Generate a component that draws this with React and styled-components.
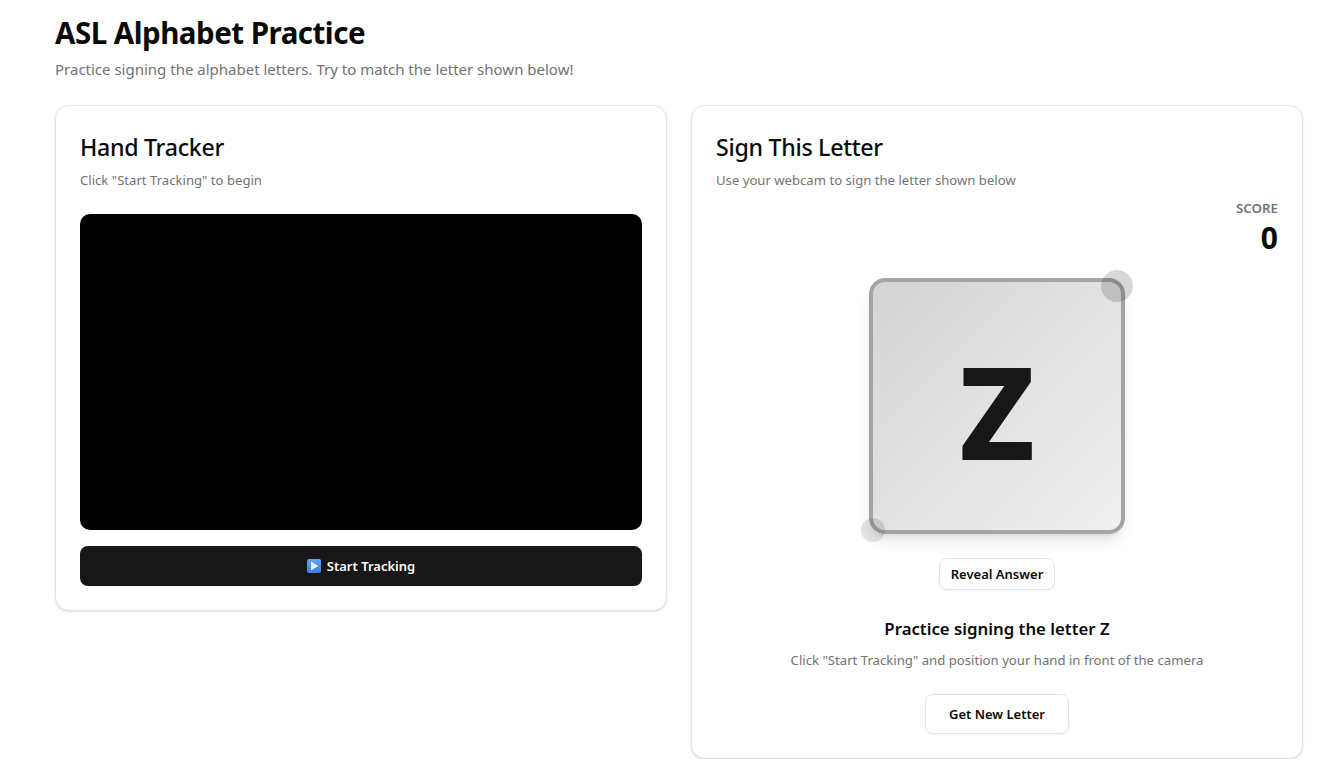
import React from 'react';
import styled, { createGlobalStyle } from 'styled-components';

const GlobalStyle = createGlobalStyle`
  html, body {
    margin: 0;
    padding: 0;
    background: #ffffff;
    color: #0a0a0a;
    font-family: "Noto Sans", "Open Sans", "Liberation Sans", sans-serif;
  }
  * { box-sizing: border-box; }
`;

const Page = styled.main`
  padding: 15px 31px 0 55px;
`;

const Title = styled.h1`
  margin: 0;
  font-size: 29.5px;
  line-height: 36px;
  font-weight: 700;
  letter-spacing: -0.5px;
`;

const Subtitle = styled.p`
  margin: 6px 0 0;
  font-size: 15px;
  line-height: 24px;
  color: #737373;
`;

const Columns = styled.div`
  display: grid;
  grid-template-columns: 1fr 1fr;
  gap: 24px;
  align-items: start;
  margin-top: 24px;
`;

const Card = styled.section`
  border: 1px solid #e5e5e5;
  border-radius: 14px;
  background: #fff;
  padding: 26px 24px 24px;
  box-shadow: 0 1px 3px rgba(0, 0, 0, 0.1), 0 1px 2px -1px rgba(0, 0, 0, 0.1);
`;

const CardTitle = styled.h2`
  margin: 0;
  font-size: 23.2px;
  line-height: 31px;
  font-weight: 500;
  letter-spacing: -0.3px;
`;

const CardNote = styled.p`
  margin: 7px 0 0;
  font-size: 13.13px;
  line-height: 20px;
  color: #737373;
`;

const Video = styled.div`
  margin-top: 24px;
  aspect-ratio: 16 / 9;
  background: #000;
  border-radius: 10px;
`;

const TrackButton = styled.button`
  display: flex;
  align-items: center;
  justify-content: center;
  gap: 6px;
  width: 100%;
  height: 40px;
  margin-top: 16px;
  border: 0;
  border-radius: 8px;
  background: #171717;
  color: #fafafa;
  font: 600 13px/20px "Noto Sans", sans-serif;
`;

const PlayBox = styled.svg`
  width: 14px;
  height: 14px;
  display: block;
`;

const ScoreBlock = styled.div`
  margin-top: 8px;
  text-align: right;
`;

const ScoreLabel = styled.div`
  font-size: 13.3px;
  line-height: 20px;
  font-weight: 600;
  color: #737373;
`;

const ScoreValue = styled.div`
  margin-top: 2px;
  font-size: 30px;
  line-height: 36px;
  font-weight: 700;
`;

const Stage = styled.div`
  display: flex;
  flex-direction: column;
  align-items: center;
`;

const LetterWrap = styled.div`
  position: relative;
  width: 256px;
  height: 256px;
  margin-top: 22px;
`;

const LetterBox = styled.div`
  display: flex;
  align-items: center;
  justify-content: center;
  width: 100%;
  height: 100%;
  padding-top: 10px;
  border: 4px solid #a4a4a4;
  border-radius: 16px;
  background: linear-gradient(135deg, #d4d4d4, #f0f0f0);
  box-shadow: 0 10px 15px -3px rgba(0, 0, 0, 0.1), 0 4px 6px -4px rgba(0, 0, 0, 0.1);
  color: #171717;
  font-size: 128px;
  line-height: 1;
  font-weight: 800;
`;

const Blob = styled.span`
  position: absolute;
  border-radius: 50%;
  background: rgba(23, 23, 23, ${props => props.$top ? 0.17 : 0.12});
  width: ${props => props.$size}px;
  height: ${props => props.$size}px;
  ${props => props.$top ? 'top: -8px; right: -8px;' : 'bottom: -8px; left: -8px;'}
`;

const OutlineButton = styled.button`
  height: ${props => props.$large ? '40px' : '32px'};
  padding: 0 ${props => props.$large ? '23px' : '11px'};
  margin-top: 24px;
  border: 1px solid #e5e5e5;
  border-radius: 8px;
  background: #fff;
  color: #0a0a0a;
  font: 600 13px/20px "Noto Sans", sans-serif;
  box-shadow: 0 1px 2px rgba(0, 0, 0, 0.05);
`;

const Prompt = styled.h3`
  margin: 25px 0 0;
  font-size: 16.8px;
  line-height: 28px;
  font-weight: 600;
`;

const Hint = styled.p`
  margin: 7px 0 0;
  font-size: 13.16px;
  line-height: 20px;
  color: #737373;
`;

export default function App() {
  return (
    <Page>
      <GlobalStyle />
      <Title>ASL Alphabet Practice</Title>
      <Subtitle>Practice signing the alphabet letters. Try to match the letter shown below!</Subtitle>
      <Columns>
        <Card>
          <CardTitle>Hand Tracker</CardTitle>
          <CardNote>Click "Start Tracking" to begin</CardNote>
          <Video />
          <TrackButton>
            <PlayBox viewBox="0 0 14 14">
              <defs>
                <linearGradient id="playFill" x1="0" y1="0" x2="0" y2="1">
                  <stop offset="0" stopColor="#63a4f2" />
                  <stop offset="1" stopColor="#3f7fdc" />
                </linearGradient>
              </defs>
              <rect width="14" height="14" rx="2" fill="url(#playFill)" />
              <path d="M4 2.6 L11.2 7 L4 11.4 Z" fill="#e6f0fc" />
            </PlayBox>
            Start Tracking
          </TrackButton>
        </Card>
        <Card>
          <CardTitle>Sign This Letter</CardTitle>
          <CardNote>Use your webcam to sign the letter shown below</CardNote>
          <ScoreBlock>
            <ScoreLabel>SCORE</ScoreLabel>
            <ScoreValue>0</ScoreValue>
          </ScoreBlock>
          <Stage>
            <LetterWrap>
              <LetterBox>Z</LetterBox>
              <Blob $top $size={32} />
              <Blob $size={24} />
            </LetterWrap>
            <OutlineButton>Reveal Answer</OutlineButton>
            <Prompt>Practice signing the letter Z</Prompt>
            <Hint>Click "Start Tracking" and position your hand in front of the camera</Hint>
            <OutlineButton $large>Get New Letter</OutlineButton>
          </Stage>
        </Card>
      </Columns>
    </Page>
  );
}
